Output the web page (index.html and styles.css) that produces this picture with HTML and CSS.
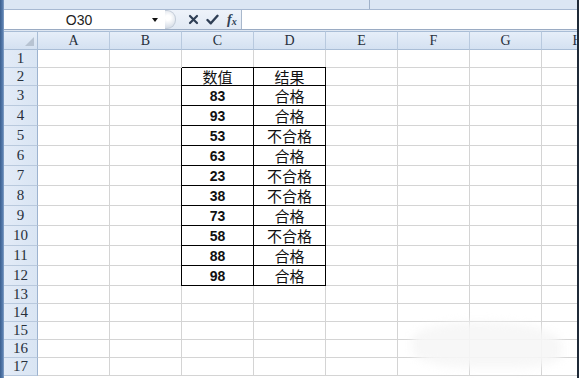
FILE: index.html
```html
<!DOCTYPE html>
<html lang="zh-CN">
<head>
  <meta charset="UTF-8">
  <title>成绩表 - Excel</title>
  <link rel="stylesheet" href="styles.css">
</head>
<body>
<div id="app">
  <div class="edge-left"></div>
  <div id="main">
    <div class="ribbon-strip"><span class="strip-tick"></span></div>
    <div class="formula-bar">
      <div class="name-box">
        <span class="name-text">O30</span>
        <span class="name-arrow"></span>
      </div>
      <div class="fx-tools">
        <span class="splitter"></span>
        <svg class="tool" width="11" height="11" viewBox="0 0 11 11">
          <path d="M2 2 L9 9 M9 2 L2 9" stroke="#2f3f55" stroke-width="2.2" stroke-linecap="round"/>
        </svg>
        <svg class="tool" width="13" height="11" viewBox="0 0 13 11">
          <path d="M1.5 6 L4.8 9.3 L11.5 1.8" fill="none" stroke="#2f3f55" stroke-width="2.4" stroke-linecap="round" stroke-linejoin="round"/>
        </svg>
        <span class="fx">f<sub>x</sub></span>
      </div>
      <div class="formula-input"></div>
    </div>
    <div class="bar-gap"></div>
    <div id="sheet"></div>
  </div>
  <div class="edge-right"></div>
  <div class="watermark"></div>
</div>

<script>
const sheetEl = document.getElementById('sheet');
const columns = ['A', 'B', 'C', 'D', 'E', 'F', 'G', 'H'];
const rowCount = 17;

// 数值 -> 结果 (C2:D12)
const scores = [83, 93, 53, 63, 23, 38, 73, 58, 88, 98];

function addCell(cls, text) {
  const cell = document.createElement('div');
  cell.className = 'cell ' + cls;
  if (text !== undefined) cell.textContent = text;
  sheetEl.appendChild(cell);
  return cell;
}

function drawSheet() {
  sheetEl.innerHTML = '';
  addCell('corner head', '');
  columns.forEach(c => addCell('col-head head', c));

  for (let r = 1; r <= rowCount; r++) {
    addCell('row-head head', r);
    columns.forEach(c => {
      let cls = '';
      let text = '';
      if ((c === 'C' || c === 'D') && r >= 2 && r <= 12) {
        cls = 'boxed';
        if (r === 2) {
          text = c === 'C' ? '数值' : '结果';
          cls += ' label';
        } else {
          const v = scores[r - 3];
          if (c === 'C') {
            text = v;
            cls += ' num';
          } else {
            text = v >= 60 ? '合格' : '不合格';
            cls += ' label';
          }
        }
      }
      addCell(cls, text);
    });
  }
}

drawSheet();
</script>
</body>
</html>
```

FILE: styles.css
```css
html, body {
  margin: 0;
  padding: 0;
  height: 100%;
  overflow: hidden;
  background: #fff;
}
#app {
  position: relative;
  display: flex;
  height: 378px;
  width: 579px;
  overflow: hidden;
}
.edge-left {
  width: 4px;
  flex: none;
  background: linear-gradient(to right, #3b5f8f, #5a7fb0 70%, #8ea7c8);
}
.edge-right {
  width: 2px;
  flex: none;
  background: #1f2a38;
}
#main {
  flex: 1;
  min-width: 0;
  display: flex;
  flex-direction: column;
}
.ribbon-strip {
  height: 9px;
  flex: none;
  background: #dbe6f4;
  border-bottom: 1px solid #a7b9d2;
  position: relative;
}
.strip-tick {
  position: absolute;
  left: 365px;
  top: 0;
  width: 1px;
  height: 9px;
  background: #9fb1c9;
}
.formula-bar {
  height: 19px;
  flex: none;
  display: flex;
  background: #fff;
  border-bottom: 1px solid #9aabc3;
}
.name-box {
  width: 161px;
  flex: none;
  display: flex;
  align-items: center;
  font-family: "Liberation Sans", Arial, sans-serif;
  font-size: 14px;
  color: #222;
}
.name-text {
  flex: 1;
  text-align: center;
  padding-left: 2px;
}
.name-arrow {
  width: 0;
  height: 0;
  border-left: 3.5px solid transparent;
  border-right: 3.5px solid transparent;
  border-top: 4px solid #111;
  margin-right: 7px;
}
.fx-tools {
  width: 76px;
  flex: none;
  display: flex;
  align-items: center;
  gap: 7px;
  background: linear-gradient(#eef3fa, #e1e9f4);
  border-right: 1px solid #a9b8cc;
}
.splitter {
  width: 10px;
  height: 17px;
  border-radius: 0 9px 9px 0;
  background: radial-gradient(circle at 30% 40%, #fff 20%, #d6dde7 80%);
  border: 1px solid #c3ccd8;
  border-left: none;
  margin-right: 5px;
}
.tool {
  flex: none;
}
.fx {
  font-family: "Liberation Serif", "Times New Roman", serif;
  font-style: italic;
  font-weight: bold;
  font-size: 14px;
  color: #2f3f55;
  margin-left: 1px;
}
.fx sub {
  font-size: 10px;
  vertical-align: -1px;
}
.formula-input {
  flex: 1;
  background: #fff;
}
.bar-gap {
  height: 1px;
  flex: none;
  background: #dfe7f2;
}
#sheet {
  display: grid;
  grid-template-columns: 34px repeat(8, 72px);
  grid-template-rows: 19px 18px 18px repeat(10, 20px) repeat(5, 18px);
}
.cell {
  box-sizing: border-box;
  border-right: 1px solid #d4d4d4;
  border-bottom: 1px solid #d4d4d4;
  display: flex;
  align-items: center;
  justify-content: center;
  white-space: nowrap;
  line-height: 1;
}
.head {
  background: linear-gradient(#e6eef9, #d4e1f1);
  font-family: "Liberation Serif", "DejaVu Serif", serif;
  font-size: 14px;
  color: #27303c;
  border-right-color: #a9bdd6;
  border-bottom-color: #a9bdd6;
  overflow: hidden;
}
.corner {
  border-top: 1px solid #a9bdd6;
  position: relative;
}
.corner::after {
  content: "";
  position: absolute;
  right: 3px;
  bottom: 3px;
  width: 0;
  height: 0;
  border-left: 9px solid transparent;
  border-bottom: 9px solid #b7c3d2;
}
.col-head {
  border-top: 1px solid #a9bdd6;
  border-right-color: #b8c9de;
  padding-top: 1px;
}
.row-head {
  background: linear-gradient(to right, #e3ebf7, #d9e5f3);
  border-right-color: #9db3cf;
  border-bottom-color: #b9c9dd;
  font-family: "Liberation Serif", "DejaVu Serif", serif;
  font-size: 15px;
}
.boxed {
  border-right-color: #000;
  border-bottom-color: #000;
  box-shadow: 0 -1px 0 #000, -1px 0 0 #000;
}
.num {
  font-family: "Liberation Sans", Arial, sans-serif;
  font-weight: bold;
  font-size: 14px;
  color: #111;
}
.label {
  font-family: "Noto Sans CJK SC", "Liberation Sans", sans-serif;
  font-size: 15px;
  color: #111;
}
.watermark {
  position: absolute;
  left: 412px;
  top: 322px;
  width: 150px;
  height: 46px;
  border-radius: 40% 50% 30% 40%;
  background: rgba(246, 246, 246, 0.9);
  filter: blur(4px);
}
```
